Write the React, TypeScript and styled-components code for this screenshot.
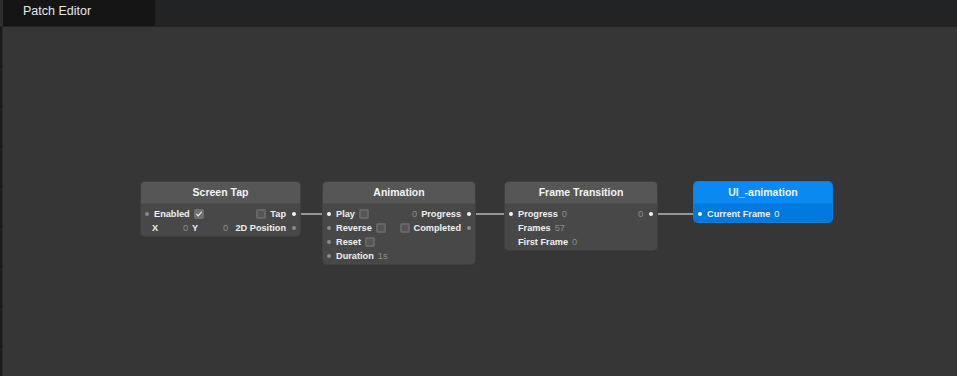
import React from 'react';
import styled, { createGlobalStyle } from 'styled-components';

const Global = createGlobalStyle`
    html, body {
        margin: 0;
        padding: 0;
        background: #363636;
        overflow: hidden;
    }
    #root {
        height: 100vh;
    }
`;

type PortKind = 'on' | 'off' | 'none';

type Side = {
    port: PortKind;
    label?: string;
    value?: string;
    box?: 'check' | 'pulse';
    fields?: [string, string][];
};

type Row = { left?: Side; right?: Side };

type NodeSpec = {
    title: string;
    x: number;
    y: number;
    w: number;
    blue?: boolean;
    rows: Row[];
};

const nodes: NodeSpec[] = [
    {
        title: 'Screen Tap',
        x: 138,
        y: 155,
        w: 159,
        rows: [
            {
                left: { port: 'off', label: 'Enabled', box: 'check' },
                right: { port: 'on', label: 'Tap', box: 'pulse' },
            },
            {
                left: { port: 'none', fields: [['X', '0'], ['Y', '0']] },
                right: { port: 'off', label: '2D Position' },
            },
        ],
    },
    {
        title: 'Animation',
        x: 320,
        y: 155,
        w: 152,
        rows: [
            {
                left: { port: 'on', label: 'Play', box: 'pulse' },
                right: { port: 'on', label: 'Progress', value: '0' },
            },
            {
                left: { port: 'off', label: 'Reverse', box: 'pulse' },
                right: { port: 'off', label: 'Completed', box: 'pulse' },
            },
            { left: { port: 'off', label: 'Reset', box: 'pulse' } },
            { left: { port: 'off', label: 'Duration', value: '1s' } },
        ],
    },
    {
        title: 'Frame Transition',
        x: 502,
        y: 155,
        w: 152,
        rows: [
            {
                left: { port: 'on', label: 'Progress', value: '0' },
                right: { port: 'on', value: '0' },
            },
            { left: { port: 'none', label: 'Frames', value: '57' } },
            { left: { port: 'none', label: 'First Frame', value: '0' } },
        ],
    },
    {
        title: 'UI_-animation',
        x: 691,
        y: 155,
        w: 138,
        blue: true,
        rows: [{ left: { port: 'on', label: 'Current Frame', value: '0' } }],
    },
];

// wire endpoints, canvas coordinates
const links = [
    [291, 187, 325, 187],
    [466, 187, 508, 187],
    [648, 187, 697, 187],
];

const Check = () => (
    <svg width="10" height="10" viewBox="0 0 10 10">
        <path d="M2.6 5.2 L4.2 6.8 L7.4 3.2" fill="none" stroke="#f2f2f2" strokeWidth="1.1" strokeLinecap="round" strokeLinejoin="round" />
    </svg>
);

const SideView: React.FC<{ side: Side; align: 'left' | 'right'; blue?: boolean }> = ({ side, align, blue }) => {
    const box = side.box ? (
        <Box $check={side.box === 'check'}>{side.box === 'check' ? <Check /> : <Inner />}</Box>
    ) : null;
    if (side.fields) {
        return (
            <Fields>
                {side.fields.map(([k, v]) => (
                    <Field key={k}>
                        <Label>{k}</Label>
                        <Value>{v}</Value>
                    </Field>
                ))}
            </Fields>
        );
    }
    if (align === 'left') {
        return (
            <Group>
                <Dot $kind={side.port} />
                {side.label && <Label>{side.label}</Label>}
                {side.value && <Value $blue={blue}>{side.value}</Value>}
                {box}
            </Group>
        );
    }
    return (
        <Group>
            {side.value && <Value>{side.value}</Value>}
            {box}
            {side.label && <Label>{side.label}</Label>}
            <Dot $kind={side.port} $right />
        </Group>
    );
};

const App: React.FC = () => {
    return (
        <Page>
            <Global />
            <TopBar>
                <Tab>Patch Editor</Tab>
            </TopBar>
            <Body>
                <Strip />
                <Canvas>
                    <Wires width="954" height="349">
                        {links.map(([x1, y1, x2, y2], i) => (
                            <line key={i} x1={x1} y1={y1} x2={x2} y2={y2} stroke="#b9b9b9" strokeWidth="1.4" />
                        ))}
                    </Wires>
                    {nodes.map((n) => (
                        <Node key={n.title} style={{ left: n.x, top: n.y, width: n.w }} $blue={n.blue}>
                            <Header $blue={n.blue}>{n.title}</Header>
                            <Rows>
                                {n.rows.map((r, i) => (
                                    <RowLine key={i}>
                                        {r.left ? <SideView side={r.left} align="left" blue={n.blue} /> : <span />}
                                        {r.right ? <SideView side={r.right} align="right" /> : <span />}
                                    </RowLine>
                                ))}
                            </Rows>
                        </Node>
                    ))}
                </Canvas>
            </Body>
        </Page>
    );
};

const Page = styled.div`
    height: 100vh;
    display: flex;
    flex-direction: column;
    font-family: 'Liberation Sans', Arial, sans-serif;
`;

const TopBar = styled.div`
    height: 27px;
    flex: none;
    display: flex;
    background: #222324;
`;

const Tab = styled.div`
    width: 155px;
    height: 26px;
    background: #151515;
    color: #e8e8e8;
    font-size: 12.5px;
    line-height: 23px;
    padding-left: 20px;
    box-sizing: border-box;
    border-left: 3px solid #2e2e2e;
`;

const Body = styled.div`
    flex: 1;
    display: flex;
    min-height: 0;
`;

const Strip = styled.div`
    width: 2px;
    flex: none;
    background: #1c1c1c;
    border-right: 1px solid #2a2a2a;
    background-image: repeating-linear-gradient(
        to bottom,
        transparent 0,
        transparent 39px,
        #0e0e0e 39px,
        #0e0e0e 40px
    );
`;

const Canvas = styled.div`
    flex: 1;
    position: relative;
    background: #363636;
    overflow: hidden;
`;

const Wires = styled.svg`
    position: absolute;
    left: 0;
    top: 0;
`;

const Node = styled.div<{ $blue?: boolean }>`
    position: absolute;
    border-radius: 4px;
    overflow: hidden;
    background: ${(p) => (p.$blue ? '#0079de' : '#484848')};
    box-shadow: 0 0 0 1px ${(p) => (p.$blue ? '#0a7fe6' : '#3f3f3f')};
`;

const Header = styled.div<{ $blue?: boolean }>`
    height: 21px;
    line-height: 21px;
    text-align: center;
    background: ${(p) => (p.$blue ? '#0a89f2' : '#565656')};
    border-bottom: 1px solid ${(p) => (p.$blue ? '#0a80e6' : '#4e4e4e')};
    color: #f4f4f4;
    font-weight: 700;
    font-size: 10.5px;
`;

const Rows = styled.div`
    display: flex;
    flex-direction: column;
    padding: 3px 0 1px;
`;

const RowLine = styled.div`
    height: 14px;
    display: flex;
    align-items: center;
    justify-content: space-between;
    padding: 0 4px;
`;

const Group = styled.div`
    display: flex;
    align-items: center;
    gap: 4px;
`;

const Fields = styled.div`
    display: flex;
    align-items: center;
    gap: 4px;
    padding-left: 7px;
`;

const Field = styled.div`
    width: 36px;
    display: flex;
    align-items: center;
    justify-content: space-between;
`;

const Dot = styled.span<{ $kind: PortKind; $right?: boolean }>`
    width: 4px;
    height: 4px;
    border-radius: 50%;
    margin: ${(p) => (p.$right ? '0 0 0 2px' : '0 1px 0 0')};
    background: ${(p) => (p.$kind === 'on' ? '#f4f4f4' : p.$kind === 'off' ? '#8a8a8a' : 'transparent')};
`;

const Label = styled.span`
    color: #f0f0f0;
    font-weight: 700;
    font-size: 9.2px;
    white-space: nowrap;
`;

const Value = styled.span<{ $blue?: boolean }>`
    color: ${(p) => (p.$blue ? '#f4f4f4' : '#8e8e8e')};
    font-size: 9.2px;
    white-space: nowrap;
`;

const Box = styled.span<{ $check?: boolean }>`
    width: 10px;
    height: 10px;
    border-radius: 2px;
    background: ${(p) => (p.$check ? '#6f6f6f' : '#666666')};
    display: flex;
    align-items: center;
    justify-content: center;
`;

const Inner = styled.span`
    width: 6px;
    height: 6px;
    border-radius: 1px;
    background: #555555;
`;

export default App;
